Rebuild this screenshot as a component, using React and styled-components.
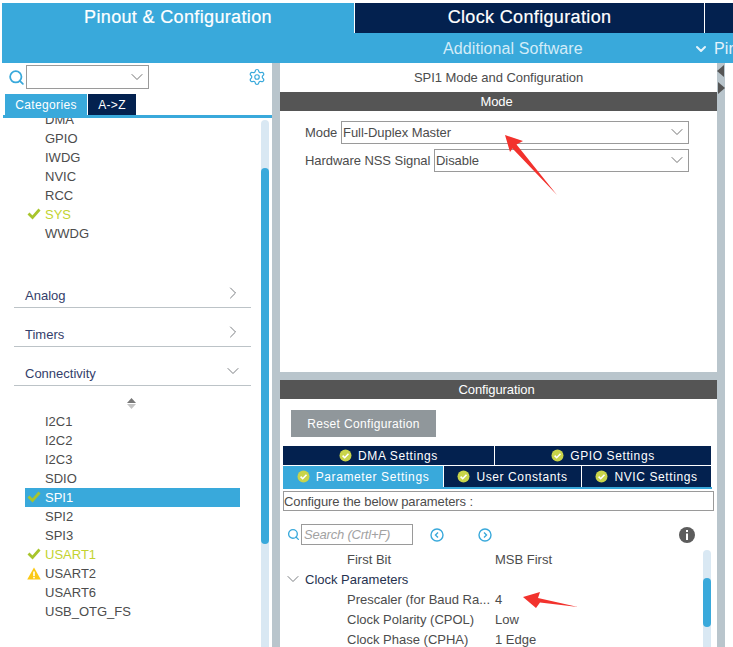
import React from 'react';
import styled, { createGlobalStyle } from 'styled-components';
import { Search, Settings, ChevronDown, ChevronRight } from 'lucide-react';

const GlobalStyle = createGlobalStyle`
  html, body {
    margin: 0;
    padding: 0;
    background: #fff;
  }
  body {
    font-family: 'Liberation Sans', Arial, sans-serif;
    color: #4c4c4c;
  }
`;

const BLUE = '#39a9db';
const NAVY = '#03214f';
const GUTTER = '#b9c5cc';
const LIME = '#c3d32f';

const Page = styled.div`
  position: relative;
  width: 733px;
  height: 647px;
  overflow: hidden;
  padding-top: 3px;
  box-sizing: border-box;
`;

/* top header */
const Header = styled.header`
  margin-left: 2px;
  background: ${BLUE};
  height: 60px;
`;

const MainTabs = styled.div`
  display: flex;
  height: 30px;
`;

const MainTab = styled.div`
  width: ${(props) => props.$width}px;
  flex: none;
  display: flex;
  align-items: center;
  justify-content: center;
  padding-bottom: 1px;
  box-sizing: border-box;
  border-left: ${(props) => (props.$active ? 'none' : '1px solid #fff')};
  background: ${(props) => (props.$active ? BLUE : NAVY)};
  color: #fff;
  font-size: 18px;
  letter-spacing: 0.35px;
  -webkit-text-stroke: 0.2px #fff;
`;

const SubBar = styled.div`
  position: relative;
  height: 30px;
  display: flex;
  align-items: center;
  padding: 1px 0 0 441px;
  box-sizing: border-box;
  color: #d3ecf8;
  font-size: 16px;
  letter-spacing: 0.1px;
`;

const PinoutLink = styled.div`
  position: absolute;
  left: 691px;
  top: 1px;
  height: 30px;
  display: flex;
  align-items: center;
  gap: 5px;
  color: #e4f3fb;
  font-size: 16px;
  white-space: nowrap;
`;

/* body columns */
const Main = styled.main`
  display: flex;
  height: 584px;
`;

const LeftPanel = styled.section`
  width: 270px;
  margin-left: 2px;
  flex: none;
  display: flex;
  flex-direction: column;
  overflow: hidden;
`;

const SearchRow = styled.div`
  display: flex;
  align-items: center;
  height: 27px;
  padding: 1px 0 0 6px;
  box-sizing: border-box;
  color: ${BLUE};
`;

const ComboBox = styled.div`
  width: ${(props) => props.$width}px;
  height: ${(props) => props.$height}px;
  flex: none;
  display: flex;
  align-items: center;
  justify-content: space-between;
  box-sizing: border-box;
  margin-left: ${(props) => props.$gap || 0}px;
  padding: 0 1px 1px 1px;
  border: 1px solid #9a9a9a;
  background: #fff;
  color: #4c4c4c;
  font-size: 13px;
`;

const GearButton = styled.div`
  margin-left: auto;
  margin-right: 6px;
  display: flex;
`;

const SideTabs = styled.div`
  display: flex;
  height: 21px;
  margin: 4px 0 0 3px;
  gap: 1px;
`;

const SideTab = styled.div`
  width: ${(props) => props.$width}px;
  display: flex;
  align-items: center;
  justify-content: center;
  background: ${(props) => (props.$active ? BLUE : NAVY)};
  color: #fff;
  font-size: 12px;
  letter-spacing: 0.35px;
`;

const TabLine = styled.div`
  height: 3px;
  margin-left: 1px;
  flex: none;
  background: ${BLUE};
`;

const ListArea = styled.div`
  flex: 1;
  min-height: 0;
  display: flex;
  overflow: hidden;
`;

const ListContent = styled.div`
  width: 259px;
  flex: none;
  margin-top: -8px;
`;

const Item = styled.div`
  height: 19px;
  margin: 0 21px 0 23px;
  padding-left: 20px;
  display: flex;
  align-items: center;
  position: relative;
  font-size: 13px;
  background: ${(props) => (props.$selected ? BLUE : 'transparent')};
  color: ${(props) => (props.$selected ? '#fff' : props.$lime ? LIME : '#4c4c4c')};
`;

const ItemIcon = styled.span`
  position: absolute;
  left: 2px;
  top: 3px;
  display: flex;
`;

const Spacer = styled.div`
  height: ${(props) => props.$height}px;
`;

const Category = styled.div`
  height: 39px;
  margin: 0 10px 0 12px;
  padding: 0 8px 4px 11px;
  box-sizing: border-box;
  display: flex;
  align-items: flex-end;
  justify-content: space-between;
  border-bottom: 1px solid #bcc3c7;
  color: #34406b;
  font-size: 13px;
`;

const CategoryChevron = styled.span`
  display: flex;
  color: #6f7276;
`;

const SortHandle = styled.div`
  height: 26px;
  margin-right: 1px;
  padding-top: 9px;
  box-sizing: border-box;
  display: flex;
  align-items: center;
  justify-content: center;
`;

const ScrollTrack = styled.div`
  width: 8px;
  flex: none;
  margin-top: ${(props) => props.$top || 0}px;
  padding-top: ${(props) => props.$offset}px;
  box-sizing: border-box;
  border-radius: 4px 4px 0 0;
  background: #d9e8f3;
`;

const ScrollThumb = styled.div`
  height: ${(props) => props.$height}px;
  border-radius: 4px;
  background: ${BLUE};
`;

const Gutter = styled.div`
  width: 8px;
  flex: none;
  background: ${GUTTER};
`;

const HandleGutter = styled(Gutter)`
  display: flex;
  flex-direction: column;
  gap: 5px;
  padding-top: 2px;
  box-sizing: border-box;
`;

const RightColumn = styled.section`
  width: 437px;
  flex: none;
  display: flex;
  flex-direction: column;
`;

const PanelTitle = styled.div`
  height: 29px;
  display: flex;
  align-items: center;
  justify-content: center;
  font-size: 13px;
  letter-spacing: -0.05px;
`;

const DarkBar = styled.div`
  height: 19px;
  flex: none;
  display: flex;
  align-items: center;
  justify-content: center;
  padding-right: 4px;
  background: #555;
  color: #fff;
  font-size: 13px;
  letter-spacing: -0.1px;
`;

const ModePanel = styled.div`
  height: 261px;
  flex: none;
  display: flex;
  flex-direction: column;
  gap: 5px;
  padding: 10px 28px 0 25px;
  box-sizing: border-box;
`;

const ModeRow = styled.div`
  display: flex;
  align-items: center;
  justify-content: space-between;
  font-size: 13px;
  letter-spacing: -0.06px;
`;

const HorizontalGap = styled.div`
  height: 8px;
  flex: none;
  background: ${GUTTER};
`;

const ConfigPanel = styled.div`
  flex: 1;
  min-height: 0;
  overflow: hidden;
`;

const ResetButton = styled.div`
  width: 145px;
  height: 27px;
  margin: 11px 0 9px 11px;
  display: flex;
  align-items: center;
  justify-content: center;
  background: #90979b;
  color: #fff;
  font-size: 12px;
  letter-spacing: 0.35px;
`;

const TabRow = styled.div`
  display: flex;
  width: 428px;
  height: ${(props) => props.$height}px;
  margin: 0 0 1px 3px;
  gap: 1px;
`;

const SettingsTab = styled.div`
  flex: ${(props) => (props.$width ? `0 0 ${props.$width}px` : '1')};
  display: flex;
  align-items: center;
  justify-content: center;
  gap: 6px;
  background: ${(props) => (props.$active ? BLUE : NAVY)};
  color: #fff;
  font-size: 12px;
  letter-spacing: 0.6px;
`;

const SettingsLine = styled.div`
  width: 429px;
  height: 2px;
  margin: -1px 0 0 3px;
  background: ${BLUE};
`;

const ParamsHint = styled.div`
  width: 431px;
  height: 20px;
  margin: 2px 0 0 3px;
  box-sizing: border-box;
  display: flex;
  align-items: center;
  border: 1px solid #9a9a9a;
  font-size: 13px;
  letter-spacing: -0.1px;
`;

const ParamToolbar = styled.div`
  display: flex;
  align-items: center;
  height: 21px;
  margin-top: 13px;
  padding-left: 7px;
  color: ${BLUE};
`;

const ParamSearch = styled.div`
  width: 112px;
  height: 21px;
  margin-left: 1px;
  padding-left: 2px;
  box-sizing: border-box;
  display: flex;
  align-items: center;
  border: 1px solid #9a9a9a;
  color: #a2a2a2;
  font-size: 13px;
  font-style: italic;
  letter-spacing: -0.2px;
`;

const NavIcon = styled.svg`
  margin-left: ${(props) => props.$gap}px;
  flex: none;
`;

const InfoIcon = styled.svg`
  margin-left: auto;
  margin-right: 22px;
  flex: none;
`;

const ParamArea = styled.div`
  display: flex;
  margin-top: 5px;
`;

const ParamList = styled.div`
  width: 423px;
  flex: none;
  margin-top: -1px;
  font-size: 13px;
`;

const ParamRow = styled.div`
  height: 20px;
  display: flex;
  align-items: center;
`;

const ParamName = styled.div`
  width: 148px;
  margin-left: 67px;
  flex: none;
  white-space: nowrap;
  overflow: hidden;
`;

const GroupRow = styled(ParamRow)`
  padding-left: 3px;
  gap: 2px;
  color: #26324f;
  svg {
    color: #6f7276;
  }
`;

const Annotation = styled.svg`
  position: absolute;
  left: ${(props) => props.$left}px;
  top: ${(props) => props.$top}px;
  pointer-events: none;
`;

const TabCheck = () => (
  <svg width="13" height="13" viewBox="0 0 13 13">
    <circle cx="6.5" cy="6.5" r="6" fill="#c9d44a" />
    <path d="M3.6 6.6l2.1 2.1 3.8-4" fill="none" stroke="#fff" strokeWidth="1.6" />
  </svg>
);

const WarnIcon = () => (
  <svg width="14" height="13" viewBox="0 0 14 13">
    <path d="M7 .5L13.800 12.500H.2z" fill="#fbc916" />
    <rect x="6.200" y="4.500" width="1.600" height="4.500" fill="#fff" />
    <rect x="6.200" y="9.800" width="1.600" height="1.600" fill="#fff" />
  </svg>
);

const SideCheck = () => (
  <svg width="14" height="12" viewBox="0 0 14 12">
    <path d="M1.500 5.500L5.500 9.500 12.500 1.500" fill="none" stroke="#a8c52c" strokeWidth="2.800" />
  </svg>
);

const ComboChevron = () => <ChevronDown size={20} strokeWidth={1.1} color="#666" />;

const topItems = [
  { name: 'DMA' },
  { name: 'GPIO' },
  { name: 'IWDG' },
  { name: 'NVIC' },
  { name: 'RCC' },
  { name: 'SYS', lime: true, icon: 'check' },
  { name: 'WWDG' },
];

const connectivityItems = [
  { name: 'I2C1' },
  { name: 'I2C2' },
  { name: 'I2C3' },
  { name: 'SDIO' },
  { name: 'SPI1', selected: true, icon: 'check' },
  { name: 'SPI2' },
  { name: 'SPI3' },
  { name: 'USART1', lime: true, icon: 'check' },
  { name: 'USART2', icon: 'warn' },
  { name: 'USART6' },
  { name: 'USB_OTG_FS' },
];

const renderItem = ({ name, lime, selected, icon }) => (
  <Item key={name} $lime={lime} $selected={selected}>
    {icon && <ItemIcon>{icon === 'warn' ? <WarnIcon /> : <SideCheck />}</ItemIcon>}
    {name}
  </Item>
);

const params = [
  ['Prescaler (for Baud Ra...', '4'],
  ['Clock Polarity (CPOL)', 'Low'],
  ['Clock Phase (CPHA)', '1 Edge'],
];

const App = () => (
  <Page>
    <GlobalStyle />
    <Header>
      <MainTabs>
        <MainTab $active $width={352}>Pinout &amp; Configuration</MainTab>
        <MainTab $width={350}>Clock Configuration</MainTab>
        <MainTab $width={29} />
      </MainTabs>
      <SubBar>
        Additional Software
        <PinoutLink>
          <ChevronDown size={16} strokeWidth={3} />
          Pinout view
        </PinoutLink>
      </SubBar>
    </Header>
    <Main>
      <LeftPanel>
        <SearchRow>
          <Search size={17} strokeWidth={2.5} />
          <ComboBox $width={123} $height={24} $gap={1}>
            <span />
            <ComboChevron />
          </ComboBox>
          <GearButton>
            <Settings size={18} strokeWidth={1.6} />
          </GearButton>
        </SearchRow>
        <SideTabs>
          <SideTab $active $width={82}>Categories</SideTab>
          <SideTab $width={48}>A-&gt;Z</SideTab>
        </SideTabs>
        <TabLine />
        <ListArea>
          <ListContent>
            {topItems.map(renderItem)}
            <Spacer $height={26} />
            <Category>
              Analog
              <CategoryChevron><ChevronRight size={20} strokeWidth={1.1} /></CategoryChevron>
            </Category>
            <Category>
              Timers
              <CategoryChevron><ChevronRight size={20} strokeWidth={1.1} /></CategoryChevron>
            </Category>
            <Category>
              Connectivity
              <CategoryChevron><ChevronDown size={20} strokeWidth={1.1} /></CategoryChevron>
            </Category>
            <SortHandle>
              <svg width="9" height="11" viewBox="0 0 9 11">
                <path d="M4.500 0L9 5H0z" fill="#777" />
                <path d="M4.500 11L9 6H0z" fill="#c4c4c4" />
              </svg>
            </SortHandle>
            {connectivityItems.map(renderItem)}
          </ListContent>
          <ScrollTrack $top={2} $offset={48}>
            <ScrollThumb $height={376} />
          </ScrollTrack>
        </ListArea>
      </LeftPanel>
      <Gutter />
      <RightColumn>
        <PanelTitle>SPI1 Mode and Configuration</PanelTitle>
        <DarkBar>Mode</DarkBar>
        <ModePanel>
          <ModeRow>
            Mode
            <ComboBox $width={348} $height={23}>
              Full-Duplex Master
              <ComboChevron />
            </ComboBox>
          </ModeRow>
          <ModeRow>
            Hardware NSS Signal
            <ComboBox $width={255} $height={23}>
              Disable
              <ComboChevron />
            </ComboBox>
          </ModeRow>
        </ModePanel>
        <HorizontalGap />
        <DarkBar>Configuration</DarkBar>
        <ConfigPanel>
          <ResetButton>Reset Configuration</ResetButton>
          <TabRow $height={19}>
            <SettingsTab $width={211}><TabCheck />DMA Settings</SettingsTab>
            <SettingsTab><TabCheck />GPIO Settings</SettingsTab>
          </TabRow>
          <TabRow $height={21}>
            <SettingsTab $active $width={160}><TabCheck />Parameter Settings</SettingsTab>
            <SettingsTab $width={137}><TabCheck />User Constants</SettingsTab>
            <SettingsTab><TabCheck />NVIC Settings</SettingsTab>
          </TabRow>
          <SettingsLine />
          <ParamsHint>Configure the below parameters :</ParamsHint>
          <ParamToolbar>
            <Search size={13} strokeWidth={2.5} />
            <ParamSearch>Search (Crtl+F)</ParamSearch>
            <NavIcon $gap={17} width="14" height="14" viewBox="0 0 14 14" fill="none" stroke={BLUE} strokeWidth="1.4">
              <circle cx="7" cy="7" r="6" />
              <path d="M8 4.500L5.500 7 8 9.500" />
            </NavIcon>
            <NavIcon $gap={34} width="14" height="14" viewBox="0 0 14 14" fill="none" stroke={BLUE} strokeWidth="1.4">
              <circle cx="7" cy="7" r="6" />
              <path d="M6 4.500L8.500 7 6 9.500" />
            </NavIcon>
            <InfoIcon width="16" height="16" viewBox="0 0 16 16">
              <circle cx="8" cy="8" r="8" fill="#5c5c5c" />
              <rect x="7" y="3" width="2" height="2" fill="#fff" />
              <rect x="7" y="6.500" width="2" height="6.500" fill="#fff" />
            </InfoIcon>
          </ParamToolbar>
          <ParamArea>
            <ParamList>
              <ParamRow>
                <ParamName>First Bit</ParamName>
                MSB First
              </ParamRow>
              <GroupRow>
                <ChevronDown size={20} strokeWidth={1.1} />
                Clock Parameters
              </GroupRow>
              {params.map(([name, value]) => (
                <ParamRow key={name}>
                  <ParamName>{name}</ParamName>
                  {value}
                </ParamRow>
              ))}
            </ParamList>
            <ScrollTrack $offset={28}>
              <ScrollThumb $height={49} />
            </ScrollTrack>
          </ParamArea>
        </ConfigPanel>
      </RightColumn>
      <HandleGutter>
        <svg width="8" height="12" viewBox="0 0 8 12">
          <path d="M7 0v12L0 6z" fill="#555" />
        </svg>
        <svg width="8" height="12" viewBox="0 0 8 12">
          <path d="M1 0v12l7-6z" fill="#555" />
        </svg>
      </HandleGutter>
    </Main>
    <Annotation $left={505} $top={135} width="53" height="61" viewBox="0 0 53 61">
      <path d="M0 0L18 6 11.500 9.500 52 60 7.500 13.500 5 17z" fill="#f2322d" />
    </Annotation>
    <Annotation $left={523} $top={592} width="56" height="17" viewBox="0 0 56 17">
      <path d="M0 5L17 0 15 6 55 15 17 10.500 13 16z" fill="#f2322d" />
    </Annotation>
  </Page>
);

export default App;
